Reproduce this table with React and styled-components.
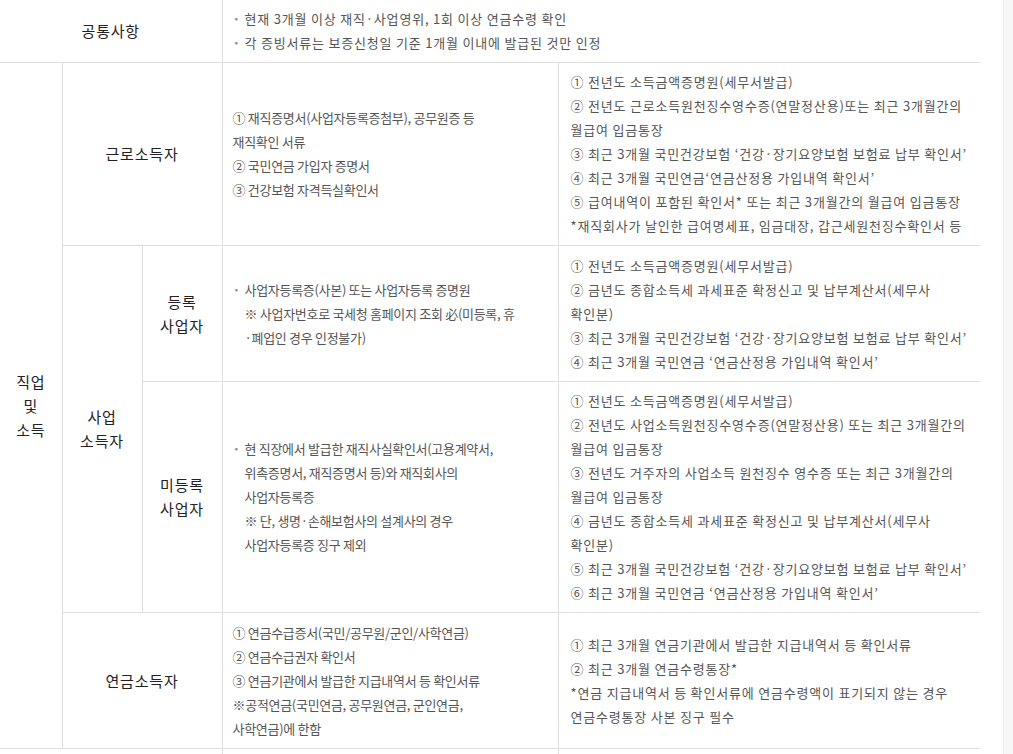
import React from "react"
import styled, { createGlobalStyle } from "styled-components"

const GlobalStyle = createGlobalStyle`
  html, body {
    margin: 0;
    padding: 0;
    background: #fff;
  }
  body {
    font-family: "Noto Sans CJK KR", "Noto Sans", sans-serif;
    overflow: hidden;
  }
`

const Page = styled.div`
  display: flex;
  height: 754px;
  overflow: hidden;
`

const Main = styled.main`
  flex: 1;
`

const ScrollTrack = styled.div`
  width: 9px;
  border-left: 1px solid #ececec;
  background: #f7f7f7;
`

const Table = styled.table`
  width: 980px;
  border-collapse: collapse;
  border-style: hidden;
  table-layout: fixed;
`

const Row = styled.tr`
  height: ${props => props.$height || "auto"};
`

const Th = styled.th`
  border: 1px solid #dedede;
  padding: 7px 6px;
  font-size: 15px;
  font-weight: 400;
  line-height: 24px;
  letter-spacing: 0.8px;
  color: #222;
  text-align: center;
  vertical-align: middle;
`

const spacing = {
  top: "0.8px",
  mid: "-0.3px",
  wide: "0.8px",
}

const Td = styled.td`
  border: 1px solid #dedede;
  padding: ${props => (props.$kind === "wide" ? "7px 12px" : "7px 10px")};
  font-size: 13px;
  line-height: 24px;
  letter-spacing: ${props => spacing[props.$kind] || "0"};
  color: #555;
  vertical-align: middle;
  white-space: nowrap;
  height: ${props => props.$height || "auto"};
`

const Line = styled.div``

const BulletItem = styled.div`
  display: flex;
`

const Dot = styled.span`
  width: 12px;
  flex: none;
  color: #888;
  font-weight: 700;
  letter-spacing: 0;
`

function Lines({ items }) {
  return items.map((t, i) => <Line key={i}>{t}</Line>)
}

function Bullet({ lines }) {
  return (
    <BulletItem>
      <Dot>·</Dot>
      <div>
        <Lines items={lines} />
      </div>
    </BulletItem>
  )
}

export default function App() {
  return (
    <>
      <GlobalStyle />
      <Page>
        <Main>
          <Table>
            <colgroup>
              <col style={{ width: 62 }} />
              <col style={{ width: 80 }} />
              <col style={{ width: 80 }} />
              <col style={{ width: 336 }} />
              <col style={{ width: 422 }} />
            </colgroup>
            <tbody>
              <Row>
                <Th colSpan={3}>공통사항</Th>
                <Td colSpan={2} $kind="top">
                  <Bullet lines={["현재 3개월 이상 재직·사업영위, 1회 이상 연금수령 확인"]} />
                  <Bullet lines={["각 증빙서류는 보증신청일 기준 1개월 이내에 발급된 것만 인정"]} />
                </Td>
              </Row>
              <Row>
                <Th rowSpan={4}>
                  직업
                  <br />및<br />
                  소득
                </Th>
                <Th colSpan={2}>근로소득자</Th>
                <Td $kind="mid">
                  <Lines
                    items={[
                      "① 재직증명서(사업자등록증첨부), 공무원증 등",
                      "재직확인 서류",
                      "② 국민연금 가입자 증명서",
                      "③ 건강보험 자격득실확인서",
                    ]}
                  />
                </Td>
                <Td $kind="wide">
                  <Lines
                    items={[
                      "① 전년도 소득금액증명원(세무서발급)",
                      "② 전년도 근로소득원천징수영수증(연말정산용)또는 최근 3개월간의",
                      "월급여 입금통장",
                      "③ 최근 3개월 국민건강보험 ‘건강·장기요양보험 보험료 납부 확인서’",
                      "④ 최근 3개월 국민연금‘연금산정용 가입내역 확인서’",
                      "⑤ 급여내역이 포함된 확인서* 또는 최근 3개월간의 월급여 입금통장",
                      "*재직회사가 날인한 급여명세표, 임금대장, 갑근세원천징수확인서 등",
                    ]}
                  />
                </Td>
              </Row>
              <Row $height="136px">
                <Th rowSpan={2}>
                  사업
                  <br />
                  소득자
                </Th>
                <Th>
                  등록
                  <br />
                  사업자
                </Th>
                <Td $kind="mid">
                  <Bullet
                    lines={[
                      "사업자등록증(사본) 또는 사업자등록 증명원",
                      "※ 사업자번호로 국세청 홈페이지 조회 必(미등록, 휴",
                      "·폐업인 경우 인정불가)",
                    ]}
                  />
                </Td>
                <Td $kind="wide">
                  <Lines
                    items={[
                      "① 전년도 소득금액증명원(세무서발급)",
                      "② 금년도 종합소득세 과세표준 확정신고 및 납부계산서(세무사",
                      "확인분)",
                      "③ 최근 3개월 국민건강보험 ‘건강·장기요양보험 보험료 납부 확인서’",
                      "④ 최근 3개월 국민연금 ‘연금산정용 가입내역 확인서’",
                    ]}
                  />
                </Td>
              </Row>
              <Row>
                <Th>
                  미등록
                  <br />
                  사업자
                </Th>
                <Td $kind="mid">
                  <Bullet
                    lines={[
                      "현 직장에서 발급한 재직사실확인서(고용계약서,",
                      "위촉증명서, 재직증명서 등)와 재직회사의",
                      "사업자등록증",
                      "※ 단, 생명·손해보험사의 설계사의 경우",
                      "사업자등록증 징구 제외",
                    ]}
                  />
                </Td>
                <Td $kind="wide">
                  <Lines
                    items={[
                      "① 전년도 소득금액증명원(세무서발급)",
                      "② 전년도 사업소득원천징수영수증(연말정산용) 또는 최근 3개월간의",
                      "월급여 입금통장",
                      "③ 전년도 거주자의 사업소득 원천징수 영수증 또는 최근 3개월간의",
                      "월급여 입금통장",
                      "④ 금년도 종합소득세 과세표준 확정신고 및 납부계산서(세무사",
                      "확인분)",
                      "⑤ 최근 3개월 국민건강보험 ‘건강·장기요양보험 보험료 납부 확인서’",
                      "⑥ 최근 3개월 국민연금 ‘연금산정용 가입내역 확인서’",
                    ]}
                  />
                </Td>
              </Row>
              <Row $height="136px">
                <Th colSpan={2}>연금소득자</Th>
                <Td $kind="mid">
                  <Lines
                    items={[
                      "① 연금수급증서(국민/공무원/군인/사학연금)",
                      "② 연금수급권자 확인서",
                      "③ 연금기관에서 발급한 지급내역서 등 확인서류",
                      "※공적연금(국민연금, 공무원연금, 군인연금,",
                      "사학연금)에 한함",
                    ]}
                  />
                </Td>
                <Td $kind="wide">
                  <Lines
                    items={[
                      "① 최근 3개월 연금기관에서 발급한 지급내역서 등 확인서류",
                      "② 최근 3개월 연금수령통장*",
                      "*연금 지급내역서 등 확인서류에 연금수령액이 표기되지 않는 경우",
                      "연금수령통장 사본 징구 필수",
                    ]}
                  />
                </Td>
              </Row>
              <Row>
                <Th colSpan={3}>&nbsp;</Th>
                <Td $kind="mid" $height="60px" />
                <Td $kind="wide" />
              </Row>
            </tbody>
          </Table>
        </Main>
        <ScrollTrack />
      </Page>
    </>
  )
}
